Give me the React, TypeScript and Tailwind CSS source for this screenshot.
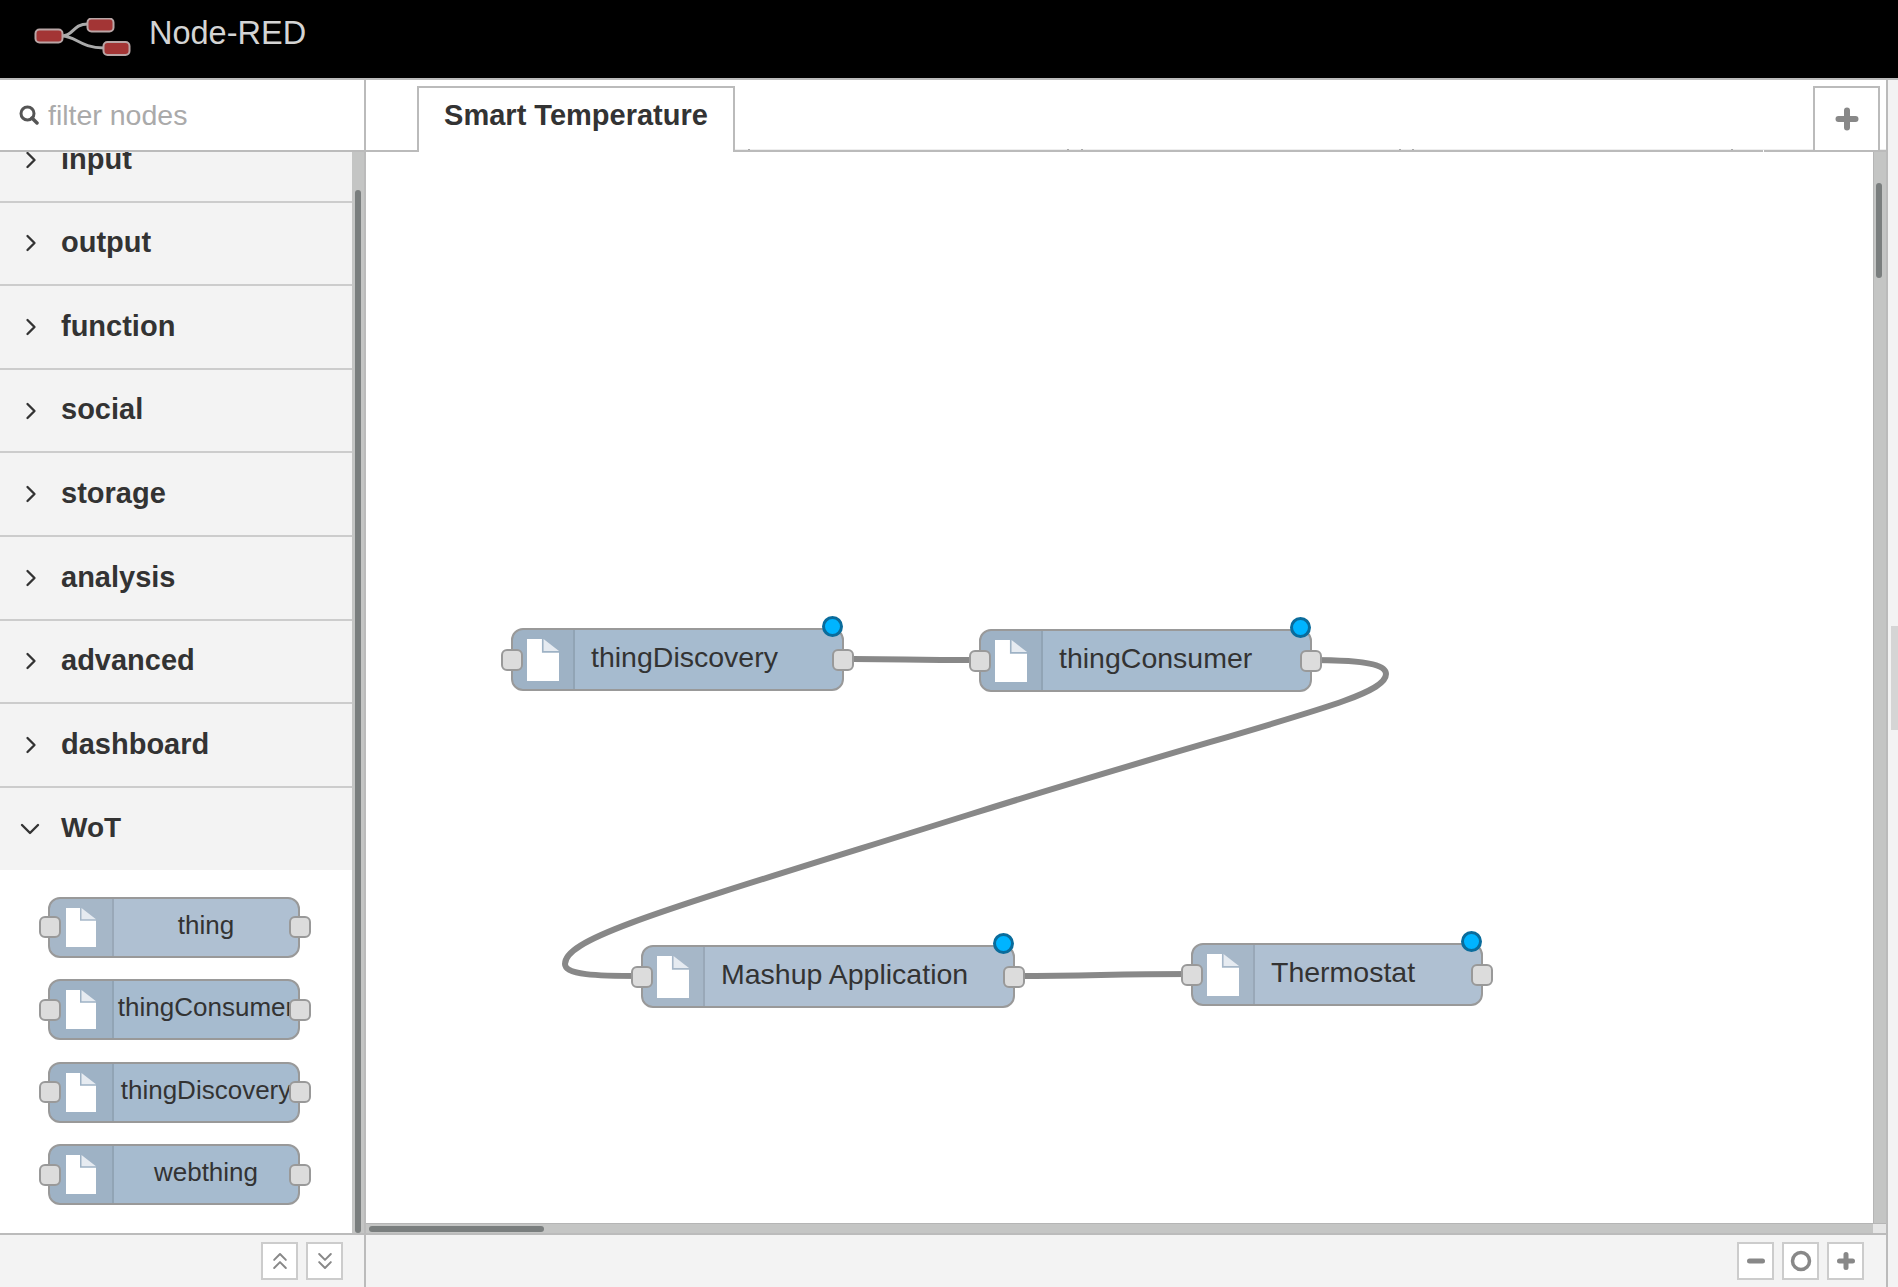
import React from "react";
import { ChevronRight, ChevronDown, ChevronsUp, ChevronsDown } from "lucide-react";

const categories = ["input", "output", "function", "social", "storage", "analysis", "advanced", "dashboard"];

function FileIcon({ w, h }: { w: number; h: number }) {
  return (
    <svg width={w} height={h} viewBox="0 0 30 40" preserveAspectRatio="none" className="block">
      <path d="M0 0H14V13H30V40H0Z" fill="#fff" />
      <path d="M15.5 0L30 11.5H15.5Z" fill="#e6ebf1" />
    </svg>
  );
}

function Port({ cls }: { cls: string }) {
  return <div className={"absolute top-1/2 -translate-y-1/2 w-[22px] h-[22px] rounded-[6px] bg-[#dcdcdc] border-2 border-[#999] " + cls} />;
}

function PaletteNode({ label, light }: { label: string; light?: boolean }) {
  return (
    <div
      className={
        "relative flex w-[252px] h-[61px] rounded-[12px] border-2 border-[#999] " +
        (light ? "bg-[#afc0d2]" : "bg-[#a6bbcf]")
      }
    >
      <div className="w-[64px] shrink-0 h-full flex items-center justify-center bg-[#0000000c] border-r-2 border-r-[#00000014] rounded-l-[10px]">
        <FileIcon w={30} h={39} />
      </div>
      <div className="flex-1 h-full flex items-center justify-center whitespace-nowrap text-[#333] text-[26px] -mt-[2px]">
        {label}
      </div>
      <Port cls="-left-[11px]" />
      <Port cls="-right-[13px]" />
    </div>
  );
}

const flowNodes = [
  { label: "thingDiscovery", pos: "left-[145px] top-[476px] w-[333px] bg-[#a6bbcf]" },
  { label: "thingConsumer", pos: "left-[613px] top-[477px] w-[333px] bg-[#a6bbcf]" },
  { label: "Mashup Application", pos: "left-[275px] top-[793px] w-[374px] bg-[#afc0d2]" },
  { label: "Thermostat", pos: "left-[825px] top-[791px] w-[292px] bg-[#afc0d2]" },
];

function FlowNode({ label, pos }: { label: string; pos: string }) {
  return (
    <div className={"absolute flex h-[63px] rounded-[12px] border-2 border-[#999] " + pos}>
      <div className="w-[62px] shrink-0 h-full flex items-center justify-center bg-[#0000000c] border-r-2 border-r-[#00000014] rounded-l-[10px]">
        <FileIcon w={32} h={42} />
      </div>
      <div className="flex-1 h-full flex items-center pl-[16px] whitespace-nowrap text-[#333] text-[28.5px] -mt-[2px]">
        {label}
      </div>
      <Port cls="-left-[12px]" />
      <Port cls="-right-[12px]" />
      <div className="absolute -top-[14px] -right-[1px] w-[21px] h-[21px] rounded-full bg-[#00b4ff] border-[3px] border-[#0a6c9c]" />
    </div>
  );
}

function SmallButton({ children }: { children: React.ReactNode }) {
  return (
    <div className="w-[37px] h-[38px] bg-white border-2 border-[#ccc] flex items-center justify-center text-[#888]">
      {children}
    </div>
  );
}

function Glyph({ kind }: { kind: "plus" | "bigplus" | "minus" | "circle" }) {
  return (
    <svg width="24" height="24" viewBox="0 0 24 24" className="block">
      {kind === "bigplus" && <path d="M12 3.5V20.5M3.5 12H20.5" stroke="#888" strokeWidth="6" strokeLinecap="round" />}
      {kind === "plus" && <path d="M12 5.5V18.5M5.5 12H18.5" stroke="#888" strokeWidth="5" strokeLinecap="round" />}
      {kind === "minus" && <path d="M5.5 12H18.5" stroke="#888" strokeWidth="5" strokeLinecap="round" />}
      {kind === "circle" && <circle cx="12" cy="12" r="8.5" fill="none" stroke="#888" strokeWidth="3.5" />}
    </svg>
  );
}

const ticks = ["left-[382px]", "left-[701px]", "left-[715px]", "left-[1033px]", "left-[1046px]", "left-[1365px]"];

export default function App() {
  return (
    <div className="w-[1898px] h-[1287px] flex flex-col overflow-hidden bg-[#f3f3f3] font-['Liberation_Sans',Arial,sans-serif]">
      <header className="h-[80px] shrink-0 bg-black border-b-2 border-[#bbb] flex items-center">
        <svg width="100" height="42" viewBox="0 0 100 42" className="ml-[34px]">
          <path d="M28 18C40 18 38 6 54 6M28 18C42 18 46 30 70 30" fill="none" stroke="#aaa" strokeWidth="3" />
          <rect x="1.5" y="11.5" width="27" height="13" rx="4" fill="#a33535" stroke="#b9a6a6" strokeWidth="2" />
          <rect x="53.5" y="0.5" width="26" height="13" rx="4" fill="#a33535" stroke="#b9a6a6" strokeWidth="2" />
          <rect x="69.5" y="24" width="26" height="13" rx="4" fill="#a33535" stroke="#b9a6a6" strokeWidth="2" />
        </svg>
        <span className="ml-[15px] -mt-[12px] text-[32.5px] text-[#d4d4d4]">Node-RED</span>
      </header>

      <main className="flex-1 flex min-h-0">
        <aside className="w-[366px] shrink-0 flex flex-col border-r-2 border-[#bbb]">
          <div className="h-[72px] shrink-0 bg-white border-b-2 border-[#bbb] flex items-center pl-[19px]">
            <svg width="20" height="20" viewBox="0 0 20 20">
              <circle cx="8.5" cy="8.5" r="6.5" fill="none" stroke="#555" strokeWidth="3" />
              <path d="M13 13L18 18" stroke="#555" strokeWidth="3.5" strokeLinecap="round" />
            </svg>
            <span className="ml-[9px] text-[28.5px] text-[#aaa]">filter nodes</span>
          </div>

          <div className="flex-1 flex min-h-0">
            <div className="flex-1 min-w-0 overflow-hidden bg-white">
              <div className="-mt-[33px]">
                {categories.map((c) => (
                  <div key={c} className="h-[83.6px] bg-[#f3f3f3] border-b-2 border-[#ccc] flex items-center pl-[17px]">
                    <ChevronRight size={28} strokeWidth={2} className="text-[#333]" />
                    <span className="ml-[16px] text-[29px] font-bold text-[#333] -mt-[1px]">{c}</span>
                  </div>
                ))}
                <div className="h-[82px] bg-[#f3f3f3] flex items-center pl-[14px]">
                  <ChevronDown size={32} strokeWidth={1.8} className="text-[#333]" />
                  <span className="ml-[15px] text-[28px] font-bold text-[#333] -mt-[2px]">WoT</span>
                </div>
                <div className="pl-[48px] pt-[27px] flex flex-col gap-[21.5px]">
                  <PaletteNode label="thing" light />
                  <PaletteNode label="thingConsumer" />
                  <PaletteNode label="thingDiscovery" />
                  <PaletteNode label="webthing" />
                </div>
              </div>
            </div>
            <div className="w-[12px] shrink-0 bg-[#c4c5c4] pl-[3px] pt-[38px]">
              <div className="w-[6px] h-full rounded-[3px] bg-[#7a7e7e]" />
            </div>
          </div>

          <div className="h-[54px] shrink-0 border-t-2 border-[#bbb] flex items-center justify-end gap-[8px] pr-[21px]">
            <SmallButton><ChevronsUp size={28} strokeWidth={1.7} /></SmallButton>
            <SmallButton><ChevronsDown size={28} strokeWidth={1.7} /></SmallButton>
          </div>
        </aside>

        <section className="w-[1522px] shrink-0 flex flex-col border-r-2 border-[#bbb]">
          <div className="relative h-[72px] shrink-0 bg-white border-b-2 border-[#bbb]">
            <div className="absolute left-[294px] right-0 bottom-0 h-[1px] bg-[#eeeeee]" />
            {ticks.map((t) => (
              <div key={t} className={"absolute bottom-0 w-[2px] h-[1px] bg-[#aaa] " + t} />
            ))}
            <div className="absolute left-[1397px] -bottom-[2px] w-[1px] h-[2px] bg-white" />
            <div className="absolute left-[51px] top-[6px] w-[318px] h-[66px] bg-white border-2 border-b-0 border-[#bbb] flex items-center justify-center text-[29px] font-bold text-[#333] pb-[8px]">
              Smart Temperature
            </div>
            <div className="absolute right-[6px] top-[6px] w-[67px] h-[64px] bg-white border-2 border-b-0 border-[#bbb] flex items-center justify-center">
              <Glyph kind="bigplus" />
            </div>
          </div>

          <div className="flex-1 flex min-h-0">
            <div className="relative flex-1 min-w-0 bg-white overflow-hidden">
              <svg className="absolute left-0 top-0" width="1508" height="1071" fill="none" stroke="#888" strokeWidth="6">
                <path d="M487 507C540 507 540 508 613 508" />
                <path d="M944 508C1010 508 1020 515 1020 522C1020 547 902 569 602 663C302 757 199 785 199 812C199 823 230 824 275 824" />
                <path d="M649 824C730 824 740 822 825 822" />
              </svg>
              {flowNodes.map((n) => (
                <FlowNode key={n.label} label={n.label} pos={n.pos} />
              ))}
            </div>
            <div className="w-[13px] shrink-0 bg-[#c4c5c4] border-l border-[#b5b5b5] pl-[2px] pt-[31px]">
              <div className="w-[6px] h-[95px] rounded-[3px] bg-[#7a7e7e]" />
            </div>
          </div>

          <div className="h-[10px] shrink-0 flex bg-[#c4c5c4] border-t border-[#b5b5b5]">
            <div className="flex-1 pl-[3px] pt-[2px]">
              <div className="w-[175px] h-[6px] rounded-[3px] bg-[#7a7e7e]" />
            </div>
            <div className="w-[13px] bg-[#e6e6e6]" />
          </div>

          <div className="h-[54px] shrink-0 border-t-2 border-[#bbb] flex items-center justify-end gap-[8px] pr-[22px]">
            <SmallButton><Glyph kind="minus" /></SmallButton>
            <SmallButton><Glyph kind="circle" /></SmallButton>
            <SmallButton><Glyph kind="plus" /></SmallButton>
          </div>
        </section>

        <div className="flex-1 pl-[3px] pt-[546px]">
          <div className="w-[7px] h-[104px] bg-[#d5d5d5]" />
        </div>
      </main>
    </div>
  );
}
